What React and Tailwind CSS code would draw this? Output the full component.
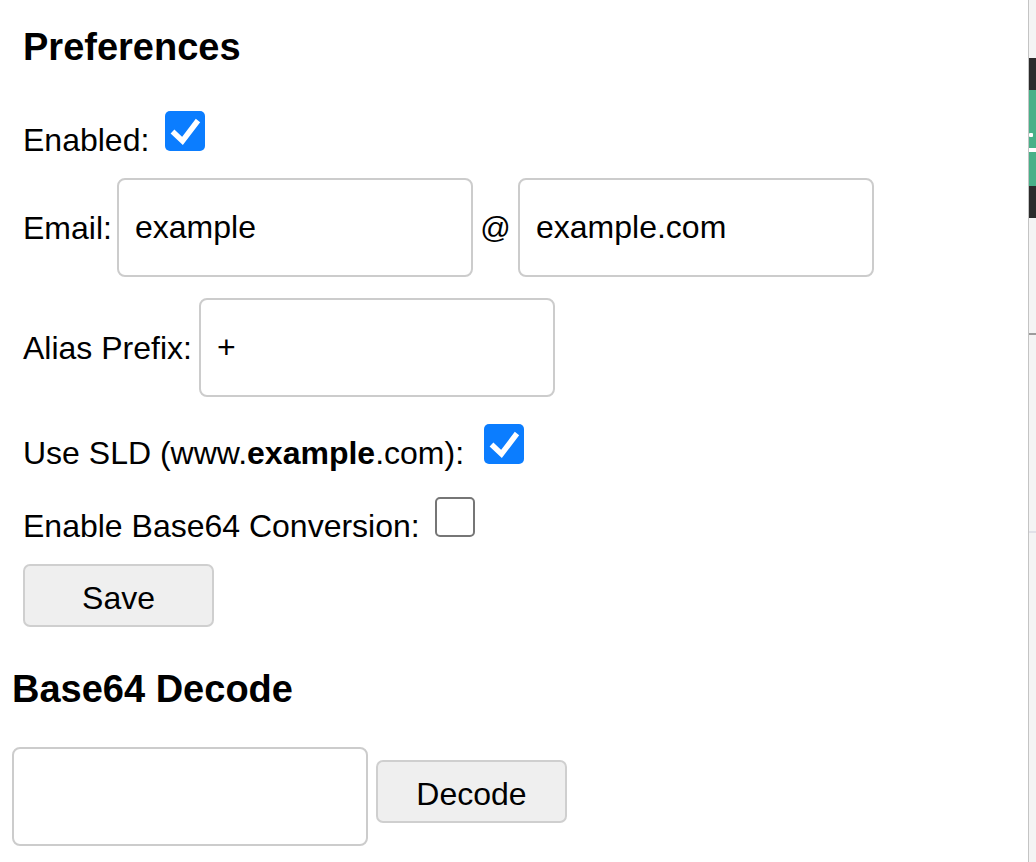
import React, { useState } from 'react';

function Check({ checked, onChange }) {
    // mac-style checkbox, drawn at 2x size
    return (
        <button
            type="button"
            onClick={onChange}
            className={
                checked
                    ? 'w-[40px] h-[40px] shrink-0 rounded-[5px] bg-[#0b7dff] flex items-center justify-center'
                    : 'block w-[40px] h-[40px] shrink-0 rounded-[5px] border-[2.5px] border-[#767676] bg-white'
            }
        >
            {checked && (
                <svg width="40" height="40" viewBox="0 0 40 40">
                    <path d="M7.5 20.5 L17.5 30 L33 9.5" fill="none" stroke="white" strokeWidth="5.5" strokeLinecap="butt" strokeLinejoin="miter" />
                </svg>
            )}
        </button>
    );
}

export default function App() {
    const [enabled, setEnabled] = useState(true);
    const [useSld, setUseSld] = useState(true);
    const [base64, setBase64] = useState(false);
    const [user, setUser] = useState('example');
    const [domain, setDomain] = useState('example.com');
    const [prefix, setPrefix] = useState('+');
    const [encoded, setEncoded] = useState('');

    const inputCls = 'h-[99px] w-[356px] border-2 border-[#cccccc] rounded-[8px] px-[16px] text-[32px] outline-none bg-white';
    const btnCls = 'w-[191px] h-[63px] pt-[5px] bg-[#efefef] border-2 border-[#cfcfcf] rounded-[7px] text-[32px] text-black';

    return (
        <div className="relative flow-root min-h-screen bg-white text-black font-['Liberation_Sans',Arial,sans-serif]">
            {/* Preferences */}
            <div className="pl-[23px]">
                <h3 className="mt-[25px] text-[38px] leading-[44px] font-bold">Preferences</h3>

                <div className="mt-[42px] flex items-end">
                    <span className="text-[32px] leading-[22px]">Enabled:</span>
                    <span className="ml-[16px] block"><Check checked={enabled} onChange={() => setEnabled(!enabled)} /></span>
                </div>

                <div className="mt-[27px] flex items-center">
                    <span className="w-[94px] text-[32px] leading-[40px]">Email:</span>
                    <input className={inputCls} value={user} onChange={(e) => setUser(e.target.value)} />
                    <span className="w-[45px] text-center text-[30px] leading-[40px]">@</span>
                    <input className={inputCls} value={domain} onChange={(e) => setDomain(e.target.value)} />
                </div>

                <div className="mt-[21px] flex items-center">
                    <span className="w-[176px] text-[32px] leading-[40px]">Alias Prefix:</span>
                    <input className={inputCls} value={prefix} onChange={(e) => setPrefix(e.target.value)} />
                </div>

                <div className="mt-[27px] flex items-end">
                    <span className="text-[32px] leading-[22px]">
                        Use SLD (www.<b>example</b>.com):
                    </span>
                    <span className="ml-[20px] block"><Check checked={useSld} onChange={() => setUseSld(!useSld)} /></span>
                </div>

                <div className="mt-[33px] flex items-end">
                    <span className="text-[32px] leading-[22px]">Enable Base64 Conversion:</span>
                    <span className="ml-[15px] block"><Check checked={base64} onChange={() => setBase64(!base64)} /></span>
                </div>

                <button type="button" className={'block mt-[27px] ' + btnCls}>Save</button>
            </div>

            {/* Base64 Decode */}
            <div className="pl-[12px]">
                <h3 className="mt-[40px] text-[38px] leading-[44px] font-bold">Base64 Decode</h3>
                <div className="mt-[36px] flex items-start">
                    <input className={inputCls} value={encoded} onChange={(e) => setEncoded(e.target.value)} />
                    <button type="button" className={'ml-[8px] mt-[13px] ' + btnCls}>Decode</button>
                </div>
            </div>

            {/* edge of the window behind */}
            <div className="absolute top-0 left-[1028px] w-[8px] h-full border-l-[1.5px] border-[#c4c4c4] bg-[#f4f4f4] flex flex-col">
                <div className="mt-[58px] h-[32px] bg-[#2b2b2b]"></div>
                <div className="h-[58px] bg-[#48b088] flex flex-col">
                    <div className="mt-[43px] w-[4px] h-[4px] bg-white rounded-[1px]"></div>
                </div>
                <div className="h-[4px] bg-white"></div>
                <div className="h-[34px] bg-[#48b088]"></div>
                <div className="h-[32px] bg-[#2b2b2b]"></div>
                <div className="mt-[115px] h-[2px] bg-[#9c9c9c]"></div>
                <div className="mt-[196px] h-[2px] bg-[#e1e1e8]"></div>
            </div>
        </div>
    );
}
